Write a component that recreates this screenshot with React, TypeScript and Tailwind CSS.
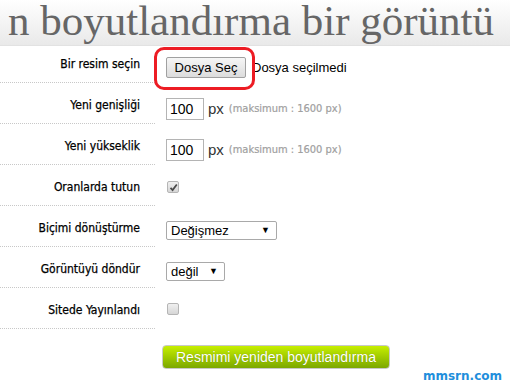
import React from "react";

const labelFont = { fontFamily: '"DejaVu Sans Condensed", "DejaVu Sans", sans-serif' };

function Row({
  label,
  children,
  first,
}: {
  label: string;
  children: React.ReactNode;
  first?: boolean;
}) {
  return (
    <div className={`flex ${first ? "h-[37px]" : "h-[41px]"}`}>
      <div
        className={`w-[155px] shrink-0 border-b border-dotted border-[#c8c8c8] pr-[15px] text-right text-[12px] leading-[16px] text-black [-webkit-text-stroke:0.25px_#000] ${first ? "pt-[10px]" : "pt-[14px]"}`}
        style={labelFont}
      >
        {label}
      </div>
      <div className={`relative flex-1 pl-[11px] ${first ? "pt-[11px]" : "pt-[15px]"}`}>{children}</div>
    </div>
  );
}

function Select({ value, width }: { value: string; width: string }) {
  return (
    <div
      className={`flex h-[19px] ${width} items-center justify-between rounded-[2px] border border-[#a9a9a9] bg-white pl-[4px] pr-[6px] text-[13px] text-black`}
      style={{ fontFamily: '"Liberation Sans", Arial, sans-serif' }}
    >
      <span>{value}</span>
      <span className="text-[9px]">▼</span>
    </div>
  );
}

function Checkbox({ checked }: { checked?: boolean }) {
  return (
    <div className="ml-[1px] flex h-[12px] w-[12px] items-center justify-center rounded-[2px] border border-[#b5b5b5] bg-gradient-to-b from-[#f0f0f0] to-[#d6d6d6]">
      {checked && (
        <svg width="9" height="9" viewBox="0 0 9 9">
          <path d="M1.5 4.8 L3.6 7 L7.8 1.5" fill="none" stroke="#4a4a4a" strokeWidth="1.8" />
        </svg>
      )}
    </div>
  );
}

function SizeInput() {
  return (
    <div className="flex items-center" style={{ fontFamily: '"Liberation Sans", Arial, sans-serif' }}>
      <div className="flex h-[22px] w-[38px] items-center border border-[#b4b4b4] bg-white pl-[3px] text-[14px] text-black">
        100
      </div>
      <span className="ml-[4px] text-[15px] text-[#333]">px</span>
      <span
        className="ml-[5px] text-[11px] text-[#a0a0a0] [-webkit-text-stroke:0.2px_#a0a0a0]"
        style={labelFont}
      >
        (maksimum : 1600 px)
      </span>
    </div>
  );
}

export default function App() {
  return (
    <div className="h-[384px] w-[510px] overflow-hidden bg-white">
      <div className="flex h-[46px] justify-end border-b border-[#e2e2e2] bg-gradient-to-b from-white to-[#e9e9e9] pr-[16px]">
        <div
          className="whitespace-nowrap pt-[1px] text-[43px] leading-[40px] text-[#666]"
          style={{ fontFamily: '"Liberation Serif", Georgia, serif' }}
        >
          n boyutlandırma bir görüntü
        </div>
      </div>

      <Row label="Bir resim seçin" first>
        <div className="flex items-center" style={{ fontFamily: '"Liberation Sans", Arial, sans-serif' }}>
          <div className="flex h-[21px] w-[80px] items-center justify-center rounded-[2px] border border-[#a0a0a0] bg-gradient-to-b from-[#f6f6f6] to-[#dcdcdc] text-[13px] text-black">
            Dosya Seç
          </div>
          <span className="ml-[6px] text-[13px] text-black">Dosya seçilmedi</span>
        </div>
        <div className="absolute left-[-1px] top-[1px] h-[43px] w-[101px] rounded-[10px] border-[3px] border-[#ed1c24]" />
      </Row>

      <Row label="Yeni genişliği">
        <SizeInput />
      </Row>
      <Row label="Yeni yükseklik">
        <SizeInput />
      </Row>
      <Row label="Oranlarda tutun">
        <div className="pt-[1px]">
          <Checkbox checked />
        </div>
      </Row>
      <Row label="Biçimi dönüştürme">
        <Select value="Değişmez" width="w-[111px]" />
      </Row>
      <Row label="Görüntüyü döndür">
        <Select value="değil" width="w-[59px]" />
      </Row>
      <Row label="Sitede Yayınlandı">
        <Checkbox />
      </Row>

      <div className="flex pl-[162px] pt-[16px]">
        <div
          className="flex h-[24px] w-[228px] items-center justify-center rounded-[4px] border border-[#c9c9c9] bg-gradient-to-b from-[#c6ef00] to-[#7ca800] text-[14px] text-white"
          style={{ fontFamily: '"Liberation Sans", Arial, sans-serif', textShadow: "0 0 1px rgba(0,0,0,0.25)" }}
        >
          Resmimi yeniden boyutlandırma
        </div>
      </div>
      <div className="flex justify-end pr-[8px]">
        <span
          className="text-[12px] font-bold leading-[14px] text-[#1f8fdc]"
          style={{ fontFamily: '"DejaVu Sans", Verdana, sans-serif' }}
        >
          mmsrn.com
        </span>
      </div>
    </div>
  );
}
